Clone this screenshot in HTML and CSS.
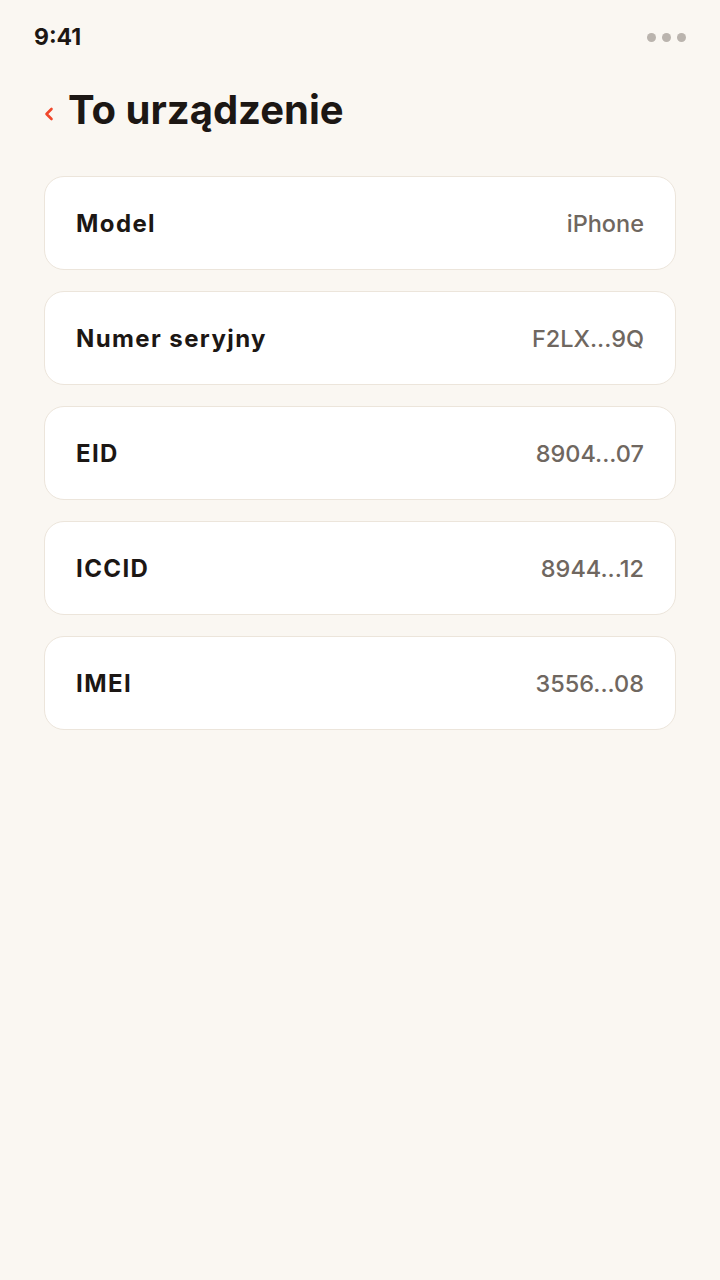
FILE: index.html
```html
<!DOCTYPE html>
<html lang="pl">
<head>
<meta charset="utf-8">
<link rel="stylesheet" href="styles.css">
</head>
<body>
<div class="screen">
  <div class="status">
    <span class="time">9:41</span>
    <span class="dots"><i></i><i></i><i></i></span>
  </div>
  <div class="header">
    <svg class="back" width="10" height="14" viewBox="0 0 10 14"><path d="M7.5 2 L2.5 7 L7.5 12" fill="none" stroke="#f0472b" stroke-width="2.6" stroke-linecap="round" stroke-linejoin="round"/></svg>
    <h1 class="title">To urządzenie</h1>
  </div>
  <div class="list">
    <div class="card"><span class="label">Model</span><span class="value">iPhone</span></div>
    <div class="card"><span class="label">Numer seryjny</span><span class="value">F2LX...9Q</span></div>
    <div class="card"><span class="label">EID</span><span class="value">8904...07</span></div>
    <div class="card"><span class="label">ICCID</span><span class="value">8944...12</span></div>
    <div class="card"><span class="label">IMEI</span><span class="value">3556...08</span></div>
  </div>
</div>
</body>
</html>
```

FILE: styles.css
```css
html, body {
  margin: 0;
  padding: 0;
  background: #faf7f2;
}
body {
  font-family: "Inter", "Lato", sans-serif;
  color: #1c1714;
}
.screen {
  width: 720px;
  height: 1280px;
  background: #faf7f2;
}
.status {
  height: 74px;
  display: flex;
  align-items: center;
  justify-content: space-between;
  padding: 0 34px;
  box-sizing: border-box;
}
.time {
  font-size: 23px;
  font-weight: 700;
}
.dots {
  display: flex;
  gap: 6px;
}
.dots i {
  display: block;
  width: 9px;
  height: 9px;
  border-radius: 50%;
  background: #bab4ae;
}
.header {
  display: flex;
  align-items: center;
  padding: 0 44px;
  height: 70px;
  gap: 14px;
}
.back {
  flex: none;
  margin-top: 9px;
}
.title {
  margin: 0;
  font-size: 40px;
  font-weight: 700;
  color: #1c1714;
}
.list {
  display: flex;
  flex-direction: column;
  gap: 21px;
  padding: 32px 44px 0;
}
.card {
  height: 94px;
  box-sizing: border-box;
  border: 1px solid #ece5db;
  border-radius: 20px;
  background: #ffffff;
  display: flex;
  align-items: center;
  justify-content: space-between;
  padding: 0 31px 0 31px;
}
.label {
  font-size: 24px;
  font-weight: 700;
  letter-spacing: 1.4px;
  color: #1c1714;
}
.value {
  font-size: 23.5px;
  font-weight: 500;
  color: #6f6760;
}
```
